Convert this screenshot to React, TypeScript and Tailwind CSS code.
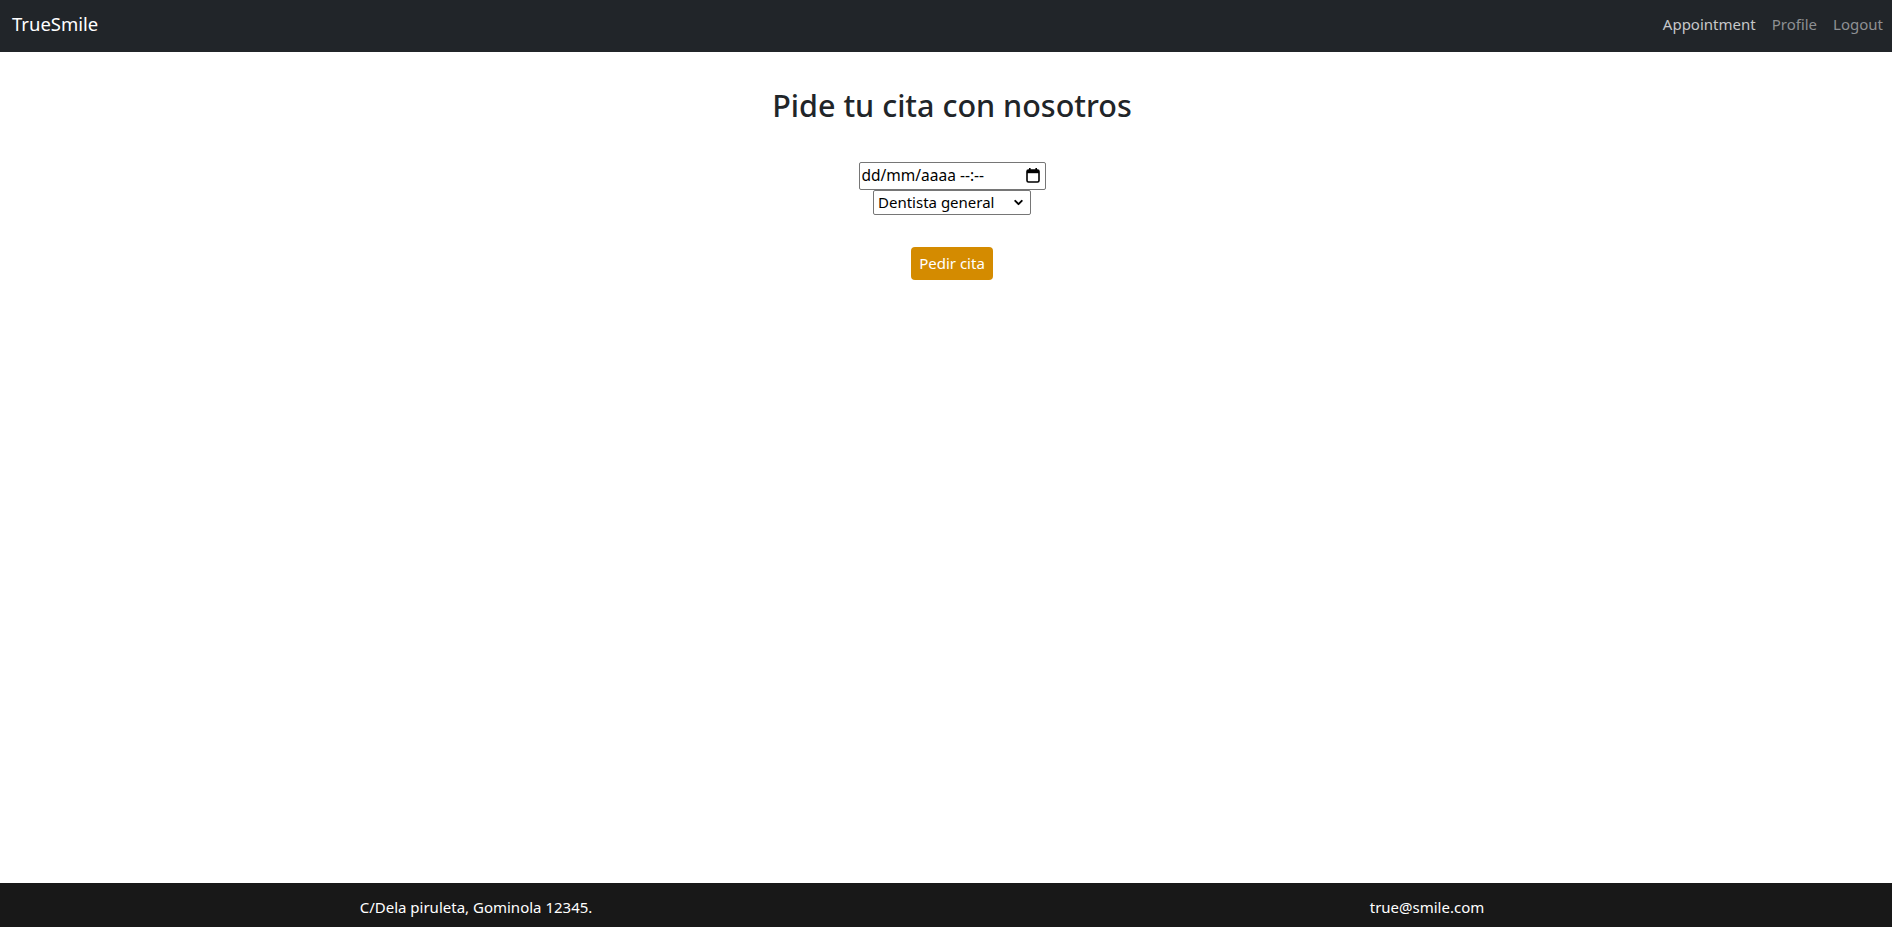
import { ChevronDown } from "lucide-react";

const font = "font-['Noto_Sans','Liberation_Sans',sans-serif]";

function CalendarIcon() {
  return (
    <svg width="14" height="15" viewBox="0 0 14 15" fill="none" aria-hidden="true">
      <rect x="3" y="0" width="1.6" height="3" fill="#000" />
      <rect x="9.4" y="0" width="1.6" height="3" fill="#000" />
      <rect x="1" y="2" width="12" height="12" rx="1.5" stroke="#000" strokeWidth="1.6" fill="none" />
      <rect x="1" y="2" width="12" height="3.2" fill="#000" />
    </svg>
  );
}

export default function App() {
  return (
    <div className={`min-h-screen flex flex-col bg-white text-[#212529] ${font}`}>
      <nav className="h-[52px] bg-[#212529] flex items-center justify-between pl-3 pr-[9px] pb-[3px]">
        <span className="text-[18.5px] text-white leading-none">TrueSmile</span>
        <ul className="flex items-center gap-[16px] text-[15px]">
          <li className="text-[#c7c8c9]">Appointment</li>
          <li className="text-[#8e9093]">Profile</li>
          <li className="text-[#8e9093]">Logout</li>
        </ul>
      </nav>

      <main className="flex-1 flex flex-col items-center pt-[35px] pl-[12px]">
        <h2 className="text-[30.5px] font-medium leading-[1.2] text-center">Pide tu cita con nosotros</h2>

        <form className="mt-[38px] flex flex-col items-center">
          <div className="w-[187px] h-[28px] border border-[#767676] rounded-[2px] flex items-center justify-between pl-[2px] pr-[5px] text-[15.5px] text-black">
            <span>dd/mm/aaaa --:--</span>
            <CalendarIcon />
          </div>
          <div className="w-[158px] h-[25px] border border-[#767676] rounded-[2px] flex items-center justify-between pl-1 pr-[5px] text-[15px] text-black">
            <span>Dentista general</span>
            <ChevronDown size={13} strokeWidth={3.5} className="text-black" />
          </div>
          <button
            type="button"
            className="mt-8 h-[33px] px-2 rounded-[4px] bg-[#d48b00] text-white text-[15px]"
          >
            Pedir cita
          </button>
        </form>
      </main>

      <footer className="h-[44px] bg-[#181818] grid grid-cols-2 items-center text-center text-white text-[15px] pt-[5px]">
        <p className="pl-[6px]">C/Dela piruleta, Gominola 12345.</p>
        <p className="pl-[16px]">true@smile.com</p>
      </footer>
    </div>
  );
}
